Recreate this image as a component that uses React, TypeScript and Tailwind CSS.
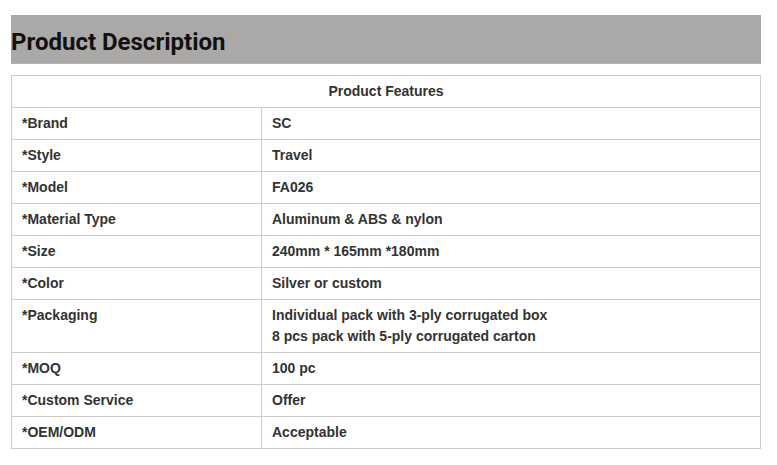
import React from 'react';

const rows: { label: string; value: string[] }[] = [
  { label: '*Brand', value: ['SC'] },
  { label: '*Style', value: ['Travel'] },
  { label: '*Model', value: ['FA026'] },
  { label: '*Material Type', value: ['Aluminum & ABS & nylon'] },
  { label: '*Size', value: ['240mm * 165mm *180mm'] },
  { label: '*Color', value: ['Silver or custom'] },
  {
    label: '*Packaging',
    value: ['Individual pack with 3-ply corrugated box', '8 pcs pack with 5-ply corrugated carton'],
  },
  { label: '*MOQ', value: ['100 pc'] },
  { label: '*Custom Service', value: ['Offer'] },
  { label: '*OEM/ODM', value: ['Acceptable'] },
];

const App: React.FC = () => {
  return (
    <div className="min-h-screen bg-white pt-[15px] pl-[11px] pr-[16px]">
      {/* Heading bar */}
      <div className="h-[49px] bg-[#aaa9a7] flex items-center pt-[5px] border-b border-[#b3b2b0]">
        <h2 className="text-[24px] font-bold text-[#111] font-['Roboto',sans-serif] leading-none">
          Product Description
        </h2>
      </div>

      {/* Features table */}
      <table className="mt-[11px] w-[750px] border-collapse font-['Liberation_Sans',Arial,sans-serif] text-[14px] font-bold text-[#333] leading-[21px]">
        <thead>
          <tr>
            <th colSpan={2} className="border border-[#ccc] h-[32px] py-[5px] text-center font-bold">
              Product Features
            </th>
          </tr>
        </thead>
        <tbody>
          {rows.map(row => (
            <tr key={row.label}>
              <td className="border border-[#ccc] w-[250px] align-top py-[5px] px-[10px]">
                {row.label}
              </td>
              <td className="border border-[#ccc] align-top py-[5px] px-[10px]">
                {row.value.map((line, i) => (
                  <div key={i}>{line}</div>
                ))}
              </td>
            </tr>
          ))}
        </tbody>
      </table>
    </div>
  );
};

export default App;
